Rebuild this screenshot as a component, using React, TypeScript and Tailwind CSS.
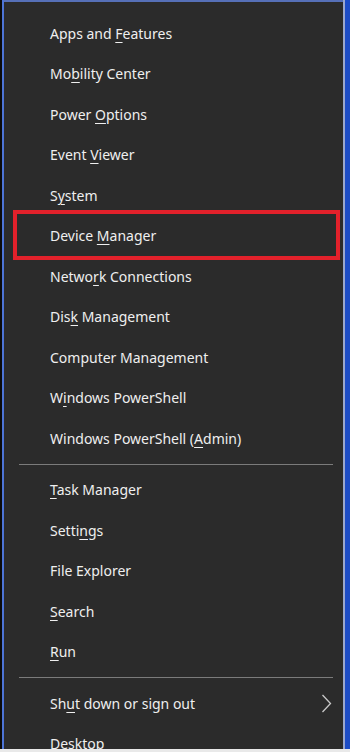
import type { ReactNode } from "react";

type Item = { label: string; key?: number; marked?: boolean; arrow?: boolean };

// access key index is the character that gets underlined
const groupA: Item[] = [
  { label: "Apps and Features", key: 9 },
  { label: "Mobility Center", key: 2 },
  { label: "Power Options", key: 6 },
  { label: "Event Viewer", key: 6 },
  { label: "System", key: 1 },
  { label: "Device Manager", key: 7, marked: true },
  { label: "Network Connections", key: 5 },
  { label: "Disk Management", key: 3 },
  { label: "Computer Management" },
  { label: "Windows PowerShell", key: 1 },
  { label: "Windows PowerShell (Admin)", key: 20 },
];

const groupB: Item[] = [
  { label: "Task Manager", key: 0 },
  { label: "Settings", key: 5 },
  { label: "File Explorer" },
  { label: "Search", key: 0 },
  { label: "Run", key: 0 },
];

const groupC: Item[] = [
  { label: "Shut down or sign out", key: 2, arrow: true },
  { label: "Desktop" },
];

function Label({ text, k }: { text: string; k?: number }) {
  if (k === undefined) return <>{text}</>;
  return (
    <>
      {text.slice(0, k)}
      <span className="underline decoration-1 underline-offset-[3px]">{text[k]}</span>
      {text.slice(k + 1)}
    </>
  );
}

function MenuRow({ item }: { item: Item }) {
  return (
    <div className="relative flex h-[40.5px] shrink-0 items-center pl-[46px] pr-[10px] text-[14px] text-[#efefef]">
      <span className="whitespace-nowrap">
        <Label text={item.label} k={item.key} />
      </span>
      {item.arrow && (
        <svg className="ml-auto mr-[1px]" width="11" height="19" viewBox="0 0 11 19" fill="none">
          <polyline points="1.5,1 9.5,9.5 1.5,18" stroke="#c9c9c9" strokeWidth="1.3" />
        </svg>
      )}
      {item.marked && (
        <span className="pointer-events-none absolute -top-[6px] -bottom-[4px] left-[9px] right-[3px] border-[4px] border-[#e3212b]" />
      )}
    </div>
  );
}

function Divider() {
  return (
    <div className="flex h-[11px] shrink-0 items-center pl-[15px] pr-[10px]">
      <div className="h-px w-full bg-[#7b7b7b]" />
    </div>
  );
}

function Group({ items }: { items: Item[] }): ReactNode {
  return items.map((it) => <MenuRow key={it.label} item={it} />);
}

export default function App() {
  return (
    <div
      className="flex h-[752px] w-[350px] flex-col overflow-hidden bg-black"
      style={{ fontFamily: '"Noto Sans", "Open Sans", sans-serif' }}
    >
      <div className="flex h-[749px] shrink-0">
        <div className="w-[2px] bg-[#0b0b0b]" />
        <div className="w-[2px] bg-[#4d74d6]" />
        <div className="flex flex-1 flex-col overflow-hidden border-t-2 border-[#5670b8] bg-[#2b2b2b] pt-[11px]">
          <Group items={groupA} />
          <Divider />
          <Group items={groupB} />
          <Divider />
          <Group items={groupC} />
        </div>
        <div className="w-[2px] bg-[#9ba7cc]" />
        <div className="w-[5px] bg-[#1d4cc6]" />
      </div>
      <div className="h-[3px] bg-[#e9e9e9]" />
    </div>
  );
}
